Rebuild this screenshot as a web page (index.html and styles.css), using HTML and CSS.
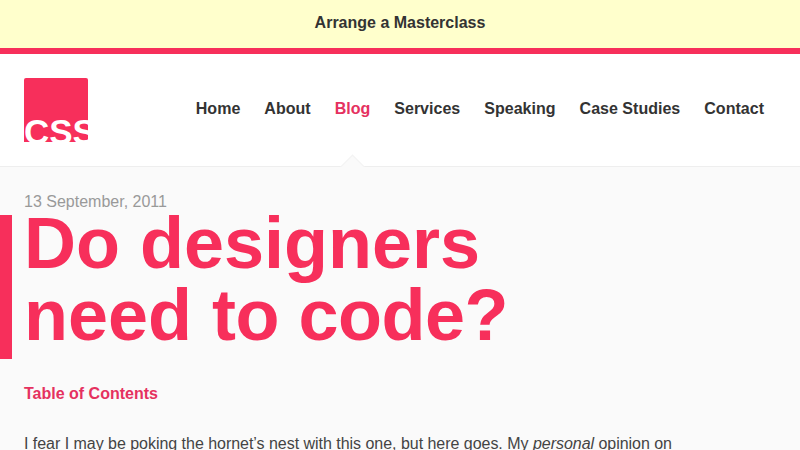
FILE: index.html
```html
<!DOCTYPE html>
<html lang="en">
<head>
  <meta charset="UTF-8">
  <meta name="viewport" content="width=device-width, initial-scale=1.0">
  <title>Do designers need to code?</title>
  <link rel="stylesheet" href="styles.css">
</head>
<body>

  <!-- Banner -->
  <a class="banner" href="#">Arrange a Masterclass</a>

  <!-- Header -->
  <header class="header">
    <a class="logo" href="#"><span class="logo-text">CSS</span></a>
    <nav class="nav">
      <a href="#">Home</a>
      <a href="#">About</a>
      <a class="current" href="#">Blog</a>
      <a href="#">Services</a>
      <a href="#">Speaking</a>
      <a href="#">Case Studies</a>
      <a href="#">Contact</a>
    </nav>
  </header>

  <!-- Post -->
  <main class="post">
    <p class="date">13 September, 2011</p>
    <h1 class="title">Do designers need&nbsp;<span class="tight">to&nbsp;code?</span></h1>
    <a class="toc" href="#">Table of Contents</a>
    <p class="intro">I fear I may be poking the hornet’s nest with this one, but here goes. My <em>personal</em> opinion on</p>
  </main>

</body>
</html>
```

FILE: styles.css
```css
:root {
  --pink: #f72f5b;
  --pink-dark: #e5315f;
  --text: #333;
  --bg: #fafafa;
}

html, body {
  height: 100%;
}

body {
  margin: 0;
  overflow: hidden;
  background: var(--bg);
  color: var(--text);
  font-family: "Liberation Sans", Arial, sans-serif;
  font-size: 16px;
  line-height: 24px;
}

a {
  text-decoration: none;
  color: inherit;
}

/* Banner */
.banner {
  display: block;
  height: 48px;
  line-height: 46px;
  background: #ffc;
  border-bottom: 6px solid var(--pink);
  text-align: center;
  font-weight: 700;
}

/* Header */
.header {
  display: flex;
  justify-content: space-between;
  align-items: center;
  height: 112px;
  padding: 0 24px;
  background: #fff;
  border-bottom: 1px solid #eee;
}

.logo {
  display: block;
  position: relative;
  width: 64px;
  height: 64px;
  overflow: hidden;
  background: var(--pink);
  border-radius: 2px 2px 0 0;
}

.logo-text {
  position: absolute;
  left: 0;
  bottom: -7px;
  color: #fff;
  font-size: 35px;
  font-weight: 700;
  line-height: 35px;
}

.nav {
  display: flex;
  margin-bottom: 2px;
  font-weight: 700;
  letter-spacing: 0.02px;
}

.nav a {
  position: relative;
  padding: 0 12px;
}

.nav a.current {
  color: var(--pink-dark);
}

/* little notch under the current page */
.nav a.current::after {
  content: "";
  position: absolute;
  left: 50%;
  top: 61px;
  box-sizing: border-box;
  width: 17px;
  height: 17px;
  margin-left: -8.5px;
  background: var(--bg);
  border: 1px solid #f2f2f2;
  border-width: 1px 0 0 1px;
  transform: rotate(45deg);
}

/* Post */
.post {
  position: relative;
  padding: 23px 24px 0;
}

.date {
  margin: 0;
  color: #999;
}

.title {
  position: relative;
  width: 560px;
  margin: -7px 0 0;
  color: var(--pink);
  font-size: 72px;
  line-height: 72px;
  font-weight: 700;
}

.title::before {
  content: "";
  position: absolute;
  left: -24px;
  top: 8px;
  width: 12px;
  height: 144px;
  background: var(--pink);
}

.tight {
  letter-spacing: -0.5px;
}

.toc {
  display: block;
  margin-top: 31px;
  color: var(--pink-dark);
  font-weight: 700;
}

.intro {
  margin: 26px 0 0;
  color: #444;
  letter-spacing: -0.03px;
}
```
